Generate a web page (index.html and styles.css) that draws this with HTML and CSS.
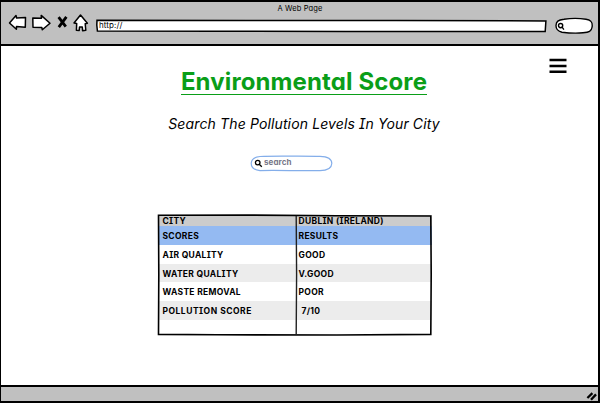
FILE: index.html
```html
<!DOCTYPE html>
<html lang="en">
<head>
<meta charset="utf-8">
<title>Environmental Score</title>
<link rel="stylesheet" href="styles.css">
</head>
<body>
<div class="window">
  <header class="chrome">
    <div class="page-name"><span>A Web Page</span></div>
    <div class="toolbar">
      <svg class="nav" width="96" height="22" viewBox="0 0 96 22" fill="#fff" stroke="#000" stroke-width="1.5" stroke-linejoin="round">
        <path d="M9.5 13 16 5.5 16.6 8 25.5 7.4 25.3 17.2 16.5 16.6 16.4 19.2Z"/>
        <path d="M32.8 8 41.5 8.3 41.2 5.4 50 13.2 42.3 19.8 41.8 17.4 33 17.2Z"/>
        <path d="M58.6 7.2 65.8 16.6M66.4 6.8 58.8 17.2" stroke-width="2.8" fill="none"/>
        <path d="M80.5 5 74 13 76.7 13.4 76.4 20.2 79.2 20.4 79.5 17 82.3 17 82.6 20.8 85.8 20.2 85.2 13.8 87.4 13.2Z"/>
      </svg>
      <div class="address">
        <svg class="frame" width="451" height="14" viewBox="0 0 451 14"><path d="M1 1.2 150 1.6 300 1.4 449.9 2 449.2 12.6 250 12.6 120 12.2 1.4 12 .8 6Z" fill="#fff" stroke="#000" stroke-width="1.5"/></svg>
        <span class="url">http://</span>
      </div>
      <svg class="find" width="40" height="18" viewBox="0 0 40 18" fill="none" stroke="#000" stroke-width="1.4">
        <path d="M9 2.3C17 1 24 1.2 31 2.2 36 3 37.8 5 37.1 10 36.5 14.5 34 15.2 28 15.8 20 16.6 13 16 7 15.2 2 14 .9 11.5 1 8.5 1.2 4.5 3 3 9 2.3Z" fill="#fff"/>
        <circle cx="5.6" cy="8.6" r="2.1"/><path d="M7.1 10.2 8.9 12.6"/>
      </svg>
    </div>
  </header>

  <main class="content">
    <div class="menu">
      <svg width="18" height="16" viewBox="0 0 18 16"><path d="M0.5 2H17.5M0.5 8H17.5M0.5 13.7H17.5" stroke="#000" stroke-width="2.5"/></svg>
    </div>
    <h1 class="title"><span>Environmental Score</span></h1>
    <p class="subtitle"><span>Search The Pollution Levels In Your City</span></p>
    <div class="search">
      <svg class="frame" width="83" height="17" viewBox="0 0 83 17"><path d="M10 1.5C25 .7 50 1.4 70 1.3 78 1.5 81.8 4 81.8 8.5 81.6 13 77 15.6 70 15.6 50 16 25 15 10 15.6 4 15 1.2 12 1.2 8.2 1.5 4 4 2 10 1.5Z" fill="#fff" stroke="#84aeea" stroke-width="1.2"/><g fill="none" stroke="#000" stroke-width="1.3"><circle cx="7.7" cy="7.6" r="2.3"/><path d="M9.2 9.2 11.8 11.7"/></g></svg>
      <span class="hint">search</span>
    </div>
    <div class="scores">
      <div class="row head"><span class="c1">CITY</span><span class="c2 dublin">DUBLIN (IRELAND)</span></div>
      <div class="row blue"><span class="c1">SCORES</span><span class="c2">RESULTS</span></div>
      <div class="row"><span class="c1">AIR QUALITY</span><span class="c2">GOOD</span></div>
      <div class="row alt"><span class="c1">WATER QUALITY</span><span class="c2 vgood">V.GOOD</span></div>
      <div class="row"><span class="c1">WASTE REMOVAL</span><span class="c2">POOR</span></div>
      <div class="row alt"><span class="c1 long">POLLUTION SCORE</span><span class="c2 indent">7/10</span></div>
      <div class="row last"><span class="c1"></span><span class="c2"></span></div>
      <svg class="outline" width="276" height="124" viewBox="0 0 276 124" fill="none" stroke="#000">
        <path d="M1.5 1.2 90 1.1 180 1.7 273.8 2 274.2 60 273.8 120.4 180 121 60 120.8 1.5 120.4 1.8 60Z" stroke-width="1.6"/>
        <path d="M139.2 2 139.6 60 139.2 120" stroke="#222" stroke-width="1.4"/>
      </svg>
    </div>
  </main>

  <footer class="status">
    <svg width="12" height="10" viewBox="0 0 12 10"><path d="M1.4 7 6.4 2.2M5 8.8 10 3.4" stroke="#000" stroke-width="2.3"/></svg>
  </footer>
</div>
</body>
</html>
```
FILE: styles.css
```css
* { box-sizing: border-box; }

body {
  margin: 0;
  background: #fff;
  color: #000;
  font-family: Inter, "Liberation Sans", sans-serif;
  font-feature-settings: "cv11", "cv08", "calt" 0;
}

.window {
  display: flex;
  flex-direction: column;
  width: 600px;
  height: 403px;
  border: solid #000;
  border-width: 2px 2px 2px 1px;
}

.chrome {
  height: 44px;
  background: #c0c0c0;
  border-bottom: 2px solid #000;
}

.page-name {
  height: 14px;
  padding-left: 1px;
  text-align: center;
  font-size: 7.5px;
  line-height: 14px;
  letter-spacing: 0.15px;
}

.toolbar {
  display: flex;
  align-items: flex-start;
  height: 26px;
}

.nav { flex: none; margin: -6px 0 0 -1px; }
.address { flex: none; position: relative; width: 451px; height: 14px; margin: 3px 8px 0 0; }
.frame { position: absolute; left: 0; top: 0; }
.url { position: relative; display: block; padding-left: 3px; font-size: 8px; line-height: 13px; letter-spacing: 0.1px; }
.find { flex: none; margin-top: 1px; }

.content {
  flex: 1;
  display: flex;
  flex-direction: column;
  align-items: center;
}

.menu { align-self: stretch; display: flex; justify-content: flex-end; height: 22px; padding: 12px 31px 0 0; }
.menu svg { flex: none; }

.title {
  margin: 0;
  height: 28px;
  padding-left: 9px;
  color: #0a9e18;
  font-size: 24px;
  font-weight: 700;
  line-height: 27px;
  letter-spacing: 0.12px;
  white-space: nowrap;
}
.title span { display: block; height: 27px; line-height: 28px; border-bottom: 1px solid #0a9e18; }

.subtitle {
  margin: 19px 0 0;
  padding-left: 9px;
  font-size: 14px;
  font-style: italic;
  line-height: 18px;
  letter-spacing: 0.13px;
  white-space: nowrap;
}

.search { position: relative; width: 83px; height: 17px; margin: 22px 17px 0 0; }
.hint { position: relative; display: block; padding-left: 14.5px; color: #778; font-size: 8px; font-weight: 700; line-height: 15px; letter-spacing: 0.1px; }

.scores {
  position: relative;
  display: flex;
  flex-direction: column;
  width: 273px;
  margin: 43px 8px 0 0;
  font-size: 8.5px;
  font-weight: 700;
  letter-spacing: 0.3px;
}
.row { display: grid; grid-template-columns: 138px 1fr; height: 18.8px; line-height: 21px; }
.row span { padding-left: 3.5px; white-space: nowrap; }
.row .c2 { padding-left: 1.5px; }
.row .indent { padding-left: 4.5px; }
.row .long { letter-spacing: 0.5px; }
.head { height: 11px; line-height: 13px; background: #ccc; }
.blue { background: #94baf2; }
.alt { background: #ececec; }
.last { height: 14px; }
.outline { position: absolute; left: -2px; top: -1px; }

.status {
  display: flex;
  justify-content: flex-end;
  height: 16px;
  padding: 4px 0 0 0;
  background: #c0c0c0;
  border-top: 2px solid #000;
}
```
